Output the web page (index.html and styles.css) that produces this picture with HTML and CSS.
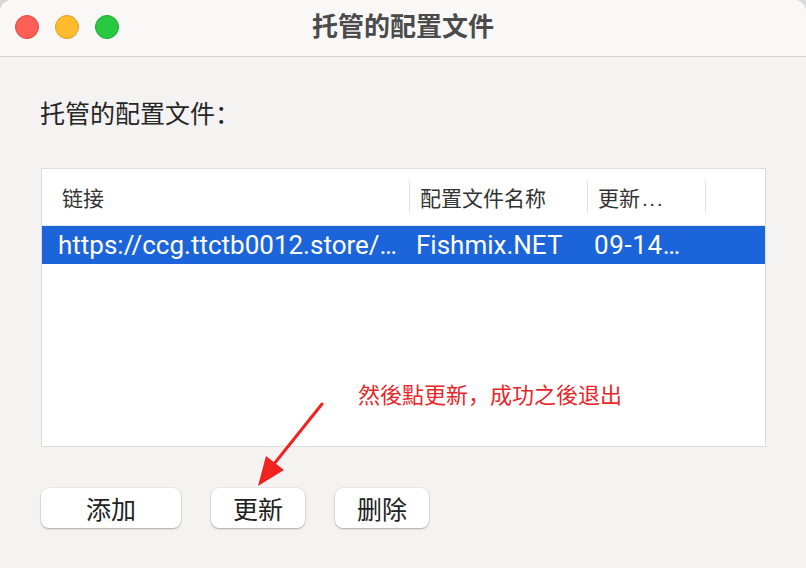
FILE: index.html
```html
<!DOCTYPE html>
<html lang="zh">
<head>
<meta charset="utf-8">
<title>托管的配置文件</title>
<link rel="stylesheet" href="styles.css">
</head>
<body>
<div class="window">
  <div class="titlebar">
    <div class="lights">
      <span class="light red"></span>
      <span class="light yellow"></span>
      <span class="light green"></span>
    </div>
    <div class="title">托管的配置文件</div>
    <div></div>
  </div>
  <div class="content">
    <div class="label">托管的配置文件<span class="colon">：</span></div>
    <div class="table">
      <div class="thead">
        <div class="th c1">链接</div>
        <div class="th c2">配置文件名称</div>
        <div class="th c3">更新<span class="dots">...</span></div>
        <div class="th c4"></div>
      </div>
      <div class="row selected">
        <div class="td c1">https://ccg.ttctb0012.store/…</div>
        <div class="td c2">Fishmix.NET</div>
        <div class="td c3">09-14…</div>
      </div>
    </div>
    <div class="buttons">
      <button class="btn add">添加</button>
      <button class="btn upd">更新</button>
      <button class="btn del">删除</button>
    </div>
    <div class="note">然後點更新，成功之後退出</div>
    <svg class="arrow" width="80" height="90" viewBox="0 0 80 90">
      <line x1="70" y1="2" x2="22" y2="62" stroke="#f0231f" stroke-width="3" stroke-linecap="round"/>
      <polygon points="6,84 14,54 32,68" fill="#f0231f"/>
    </svg>
  </div>
</div>
</body>
</html>
```
FILE: styles.css
```css
* { box-sizing: border-box; margin: 0; padding: 0; }
html, body { width: 806px; height: 568px; overflow: hidden; background: #d9d9d9; }
body { font-family: "Noto Sans CJK SC", "Liberation Sans", sans-serif; }
.window {
  width: 806px; height: 568px;
  background: #f4f3f2;
  border-radius: 12px 12px 0 0;
  overflow: hidden;
  display: flex; flex-direction: column;
}
.titlebar {
  height: 57px;
  background: #f9f8f7;
  border-bottom: 1px solid #d6d5d4;
  display: grid;
  grid-template-columns: 1fr auto 1fr;
  align-items: center;
}
.lights { display: flex; gap: 16px; padding-left: 15px; padding-bottom: 2px; }
.light { width: 24px; height: 24px; border-radius: 50%; display: block; }
.red { background: #fe5f57; border: 1px solid #e3493f; }
.yellow { background: #febc2e; border: 1px solid #e0a023; }
.green { background: #28c840; border: 1px solid #1ea931; }
.title {
  font-size: 26px; font-weight: 700; color: #4b4b4b;
  padding-bottom: 7px;
}
.content { position: relative; flex: 1; padding: 37px 40px 0 41px; }
.label { font-size: 25px; color: #262626; line-height: 36px; margin-left: -1px; }
.colon { font-family: "Noto Sans CJK TC", sans-serif; }
.table {
  margin-top: 38px;
  height: 279px;
  background: #fff;
  border: 1px solid #dcdcdc;
}
.thead {
  display: flex; align-items: center;
  height: 57px;
  border-bottom: 1px solid #e6e6e6;
}
.th {
  font-size: 21px; color: #333; height: 32px; line-height: 32px;
  padding-left: 20px;
  border-right: 1px solid #e2e2e2;
}
.th .dots { font-family: "Liberation Sans", sans-serif; letter-spacing: 1.5px; margin-left: 2px; }
.th.c1 { width: 368px; }
.th.c2 { width: 178px; padding-left: 10px; }
.th.c3 { width: 118px; padding-left: 10px; }
.th.c4 { border-right: none; }
.row { display: flex; height: 38px; align-items: center; }
.row.selected { background: #1c64da; color: #fff; }
.td {
  font-family: Roboto, "Liberation Sans", sans-serif;
  font-size: 26px; white-space: nowrap; overflow: hidden;
}
.td.c1 { width: 365px; padding-left: 16px; }
.td.c2 { width: 187px; padding-left: 9px; }
.td.c3 { width: 150px; padding-left: 0; letter-spacing: 0.6px; }
.buttons { display: flex; gap: 30px; margin-top: 41px; }
.btn {
  height: 40px; background: #fff; border: none;
  border-radius: 8px;
  box-shadow: 0 1px 2px rgba(0,0,0,0.28), 0 0 0 0.5px rgba(0,0,0,0.08);
  font-family: "Noto Sans CJK SC", sans-serif;
  font-size: 25px; color: #222;
}
.btn.add { width: 140px; }
.btn.upd { width: 94px; }
.btn.del { width: 94px; }
.note {
  position: absolute; left: 358px; top: 320px;
  font-size: 22px; color: #e8262a; white-space: nowrap;
}
.arrow { position: absolute; left: 252px; top: 345px; }
```
